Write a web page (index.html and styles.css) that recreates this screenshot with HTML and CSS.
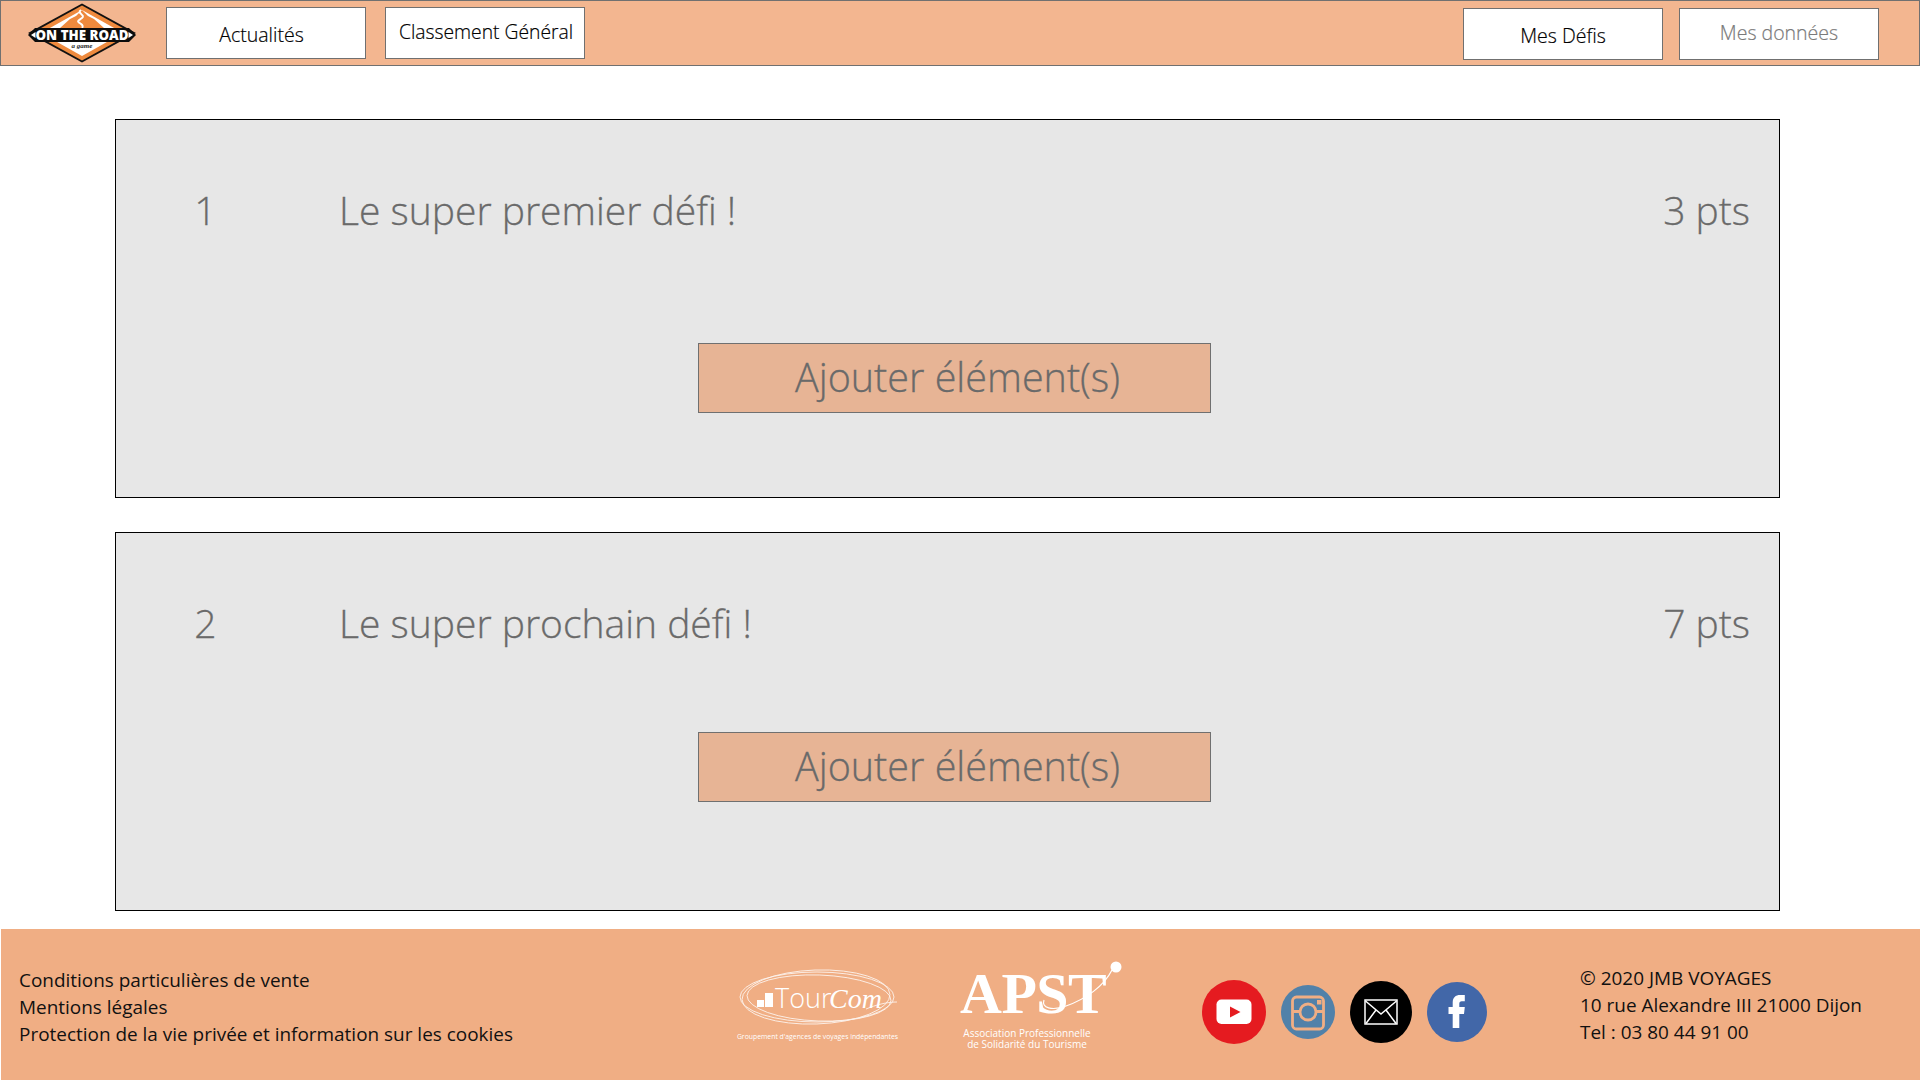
FILE: index.html
```html
<!DOCTYPE html>
<html lang="fr">
<head>
<meta charset="utf-8">
<title>Mes Défis</title>
<link rel="stylesheet" href="styles.css">
</head>
<body>
<header class="topbar">
  <svg class="logo" viewBox="0 0 112 62" width="112" height="62">
    <polygon points="56,1.500 110,31 56,60.500 2,31" fill="#111"/>
    <polygon points="56,3.500 106,31 56,58.500 6,31" fill="#ee8a3e"/>
    <polygon points="56,8 97,31 56,54 15,31" fill="#fff"/>
    <polygon points="56,8 62,14 68,17 78,26 34,26 44,17 50,14" fill="#ee8a3e"/>
    <path d="M55 8c-5 3 5 5 1 8s-6 3-1 6c2 1 2 3 1 4" fill="none" stroke="#fff" stroke-width="2"/>
    <rect x="9" y="26" width="94" height="14" fill="#0c0c0c"/>
    <polygon points="2,33 9,26 9,40" fill="#0c0c0c"/>
    <polygon points="110,33 103,26 103,40" fill="#0c0c0c"/>
    <polygon points="5,33 9.500,30 9.500,36" fill="#fff"/>
    <polygon points="107,33 102.500,30 102.500,36" fill="#fff"/>
    <text class="logo-main" x="56" y="37.800" text-anchor="middle">ON THE ROAD</text>
    <text class="logo-sub" x="56" y="46" text-anchor="middle">a game</text>
  </svg>
  <nav class="nav nav-left">
    <a class="btn btn-low btn-shift">Actualités</a>
    <a class="btn btn-high btn-tight">Classement Général</a>
  </nav>
  <nav class="nav nav-right">
    <a class="btn btn-low">Mes Défis</a>
    <a class="btn btn-high btn-muted">Mes données</a>
  </nav>
</header>

<main class="content">
  <section class="card">
    <div class="card-row">
      <span class="card-num">1</span>
      <span class="card-title">Le super premier défi !</span>
      <span class="card-pts">3 pts</span>
    </div>
    <button class="add">Ajouter élément(s)</button>
  </section>
  <section class="card">
    <div class="card-row">
      <span class="card-num">2</span>
      <span class="card-title">Le super prochain défi !</span>
      <span class="card-pts">7 pts</span>
    </div>
    <button class="add add-high">Ajouter élément(s)</button>
  </section>
</main>

<footer class="footer">
  <ul class="links">
    <li>Conditions particulières de vente</li>
    <li>Mentions légales</li>
    <li>Protection de la vie privée et information sur les cookies</li>
  </ul>
  <svg class="tourcom" viewBox="0 0 164 76" width="164" height="76">
    <g fill="none" stroke="#fff" stroke-width=".9" opacity=".85">
      <ellipse cx="81" cy="30" rx="77" ry="25"/>
      <ellipse cx="80" cy="30" rx="74" ry="27" transform="rotate(-2 80 30)"/>
      <ellipse cx="83" cy="31" rx="72" ry="23" transform="rotate(2 83 31)"/>
      <path d="M130 42c10-4 20-7 31-7"/>
    </g>
    <g fill="#fff">
      <rect x="21" y="33" width="7" height="7"/>
      <rect x="29" y="26" width="8" height="14"/>
    </g>
    <text class="tc-tour" x="39" y="40.500">Tour</text>
    <text class="tc-com" x="93" y="40.500">Com</text>
    <text class="tc-sub" x="81.500" y="71.500" text-anchor="middle">Groupement d'agences de voyages indépendantes</text>
  </svg>
  <svg class="apst" viewBox="0 0 170 90" width="170" height="90">
    <text class="apst-main" x="4" y="53">APST</text>
    <path d="M88 40c-3 8 8 11 22 6 20-7 38-20 46-36" fill="none" stroke="#fff" stroke-width="1.200"/>
    <circle cx="160" cy="7" r="5.500" fill="#fff"/>
    <text class="apst-sub" x="71" y="77" text-anchor="middle">Association Professionnelle</text>
    <text class="apst-sub" x="71" y="88" text-anchor="middle">de Solidarité du Tourisme</text>
  </svg>
  <div class="social">
    <svg class="ico" viewBox="0 0 64 64" width="64" height="64">
      <circle cx="32" cy="32" r="32" fill="#e51b20"/>
      <rect x="14.500" y="19.500" width="35" height="24.500" rx="5" fill="#fff"/>
      <polygon points="28,26.500 38.500,32 28,37.500" fill="#e51b20"/>
    </svg>
    <svg class="ico" viewBox="0 0 54 54" width="54" height="54">
      <circle cx="27" cy="27" r="27" fill="#5181a9"/>
      <rect x="11.500" y="12" width="31" height="32" rx="4" fill="none" stroke="#f0ae84" stroke-width="2.800"/>
      <path d="M11 26.500h9M34 26.500h9" stroke="#f0ae84" stroke-width="2.800"/>
      <circle cx="27" cy="27" r="8" fill="none" stroke="#f0ae84" stroke-width="2.800"/>
      <rect x="36" y="15" width="4.500" height="4.500" fill="#f0ae84"/>
    </svg>
    <svg class="ico" viewBox="0 0 62 62" width="62" height="62">
      <circle cx="31" cy="31" r="31" fill="#000"/>
      <rect x="15" y="19" width="32" height="24" fill="none" stroke="#fff" stroke-width="1.500"/>
      <path d="M15.500 20 31 33 46.500 20M16 42.500 26 29M46 42.500 36 29" fill="none" stroke="#fff" stroke-width="1.500"/>
    </svg>
    <svg class="ico" viewBox="0 0 60 60" width="60" height="60">
      <circle cx="30" cy="30" r="30" fill="#4267a8"/>
      <path d="M25.700 46V32h-4.200v-7h4.200v-4.500c0-5 2.800-7.500 7.500-7.500h4.600v6.200h-3c-1.800 0-2.500.9-2.500 2.500v3.300h5.500l-.8 7h-4.700v14z" fill="#fff"/>
    </svg>
  </div>
  <address class="contact">
    <span>© 2020 JMB VOYAGES</span>
    <span>10 rue Alexandre III 21000 Dijon</span>
    <span>Tel : 03 80 44 91 00</span>
  </address>
</footer>
</body>
</html>
```

FILE: styles.css
```css
* { box-sizing: border-box; }
html, body { margin: 0; padding: 0; }
body {
  width: 1920px;
  height: 1080px;
  overflow: hidden;
  background: #fff;
  font-family: "Open Sans", "Noto Sans", sans-serif;
  display: flex;
  flex-direction: column;
}

/* top bar */
.topbar {
  height: 66px;
  flex: none;
  background: #f3b690;
  border: 1px solid #707070;
  display: flex;
  align-items: center;
  padding-left: 25px;
}
.logo { flex: none; }
.nav { display: flex; align-items: center; }
.nav-left { margin-left: 28px; gap: 19px; }
.nav-right { margin-left: auto; margin-right: 40px; gap: 16px; padding-top: 2px; }
.btn {
  width: 200px;
  height: 52px;
  background: #fff;
  border: 1px solid #707070;
  color: #000;
  font-size: 19.500px;
  font-weight: 300;
  -webkit-text-stroke: .2px currentColor;
  display: flex;
  justify-content: center;
  align-items: center;
}
.btn-low { padding-top: 2px; }
.btn-high { padding-bottom: 4px; }
.btn-shift { padding-right: 9px; }
.btn-tight { font-size: 19.300px; padding-left: 2px; }
.btn-muted { color: #7a7a7a; }

/* cards */
.content {
  flex: 1;
  padding: 53px 140px 0 115px;
  display: flex;
  flex-direction: column;
  gap: 34px;
}
.card {
  height: 379px;
  background: #e7e7e7;
  border: 1px solid #000;
  color: #6a6a6a;
  display: flex;
  flex-direction: column;
}
.card-row {
  display: flex;
  align-items: center;
  height: 50px;
  margin-top: 64px;
  font-size: 39px;
  font-weight: 300;
  -webkit-text-stroke: .3px currentColor;
}
.card-num { width: 223px; text-align: center; padding-right: 44px; flex: none; }
.card-title { flex: 1; }
.card-pts { padding-right: 29px; }
.add {
  align-self: flex-start;
  margin: 109px 0 0 582px;
  width: 513px;
  height: 70px;
  background: #e7b495;
  border: 1px solid #707070;
  color: #6a6a6a;
  font: 300 39.500px "Open Sans", "Noto Sans", sans-serif;
  -webkit-text-stroke: .3px currentColor;
  padding: 0 0 3px 6px;
}
.add-high { margin-top: 85px; }

/* footer */
.footer {
  height: 151px;
  flex: none;
  margin-left: 1px;
  background: #f0ae84;
  display: flex;
  align-items: center;
  color: #111;
  font-size: 18.950px;
}
.links {
  list-style: none;
  margin: 5px 0 0 18px;
  padding: 0;
  width: 717px;
  line-height: 27px;
}
.tourcom { flex: none; }
.apst { flex: none; margin-left: 56px; }
.social {
  flex: none;
  display: flex;
  align-items: center;
  margin: 14px 0 0 76px;
  gap: 15px;
}
.contact {
  font-style: normal;
  display: flex;
  flex-direction: column;
  line-height: 27px;
  margin: 2px 0 0 93px;
}

/* svg text */
.logo-main { font: 800 13.300px "Open Sans", sans-serif; fill: #fff; }
.logo-sub { font: italic 700 7px "Liberation Serif", serif; fill: #222; }
.tc-tour { font: 300 27px "Open Sans", sans-serif; fill: #fff; }
.tc-com { font: italic 28px "Liberation Serif", serif; fill: #fff; }
.tc-sub { font: 6.850px "Open Sans", sans-serif; fill: #fff; }
.apst-main { font: 700 58px "Liberation Serif", serif; fill: #fff; letter-spacing: -.5px; }
.apst-sub { font: 10px "Open Sans", sans-serif; fill: #fff; }
```
